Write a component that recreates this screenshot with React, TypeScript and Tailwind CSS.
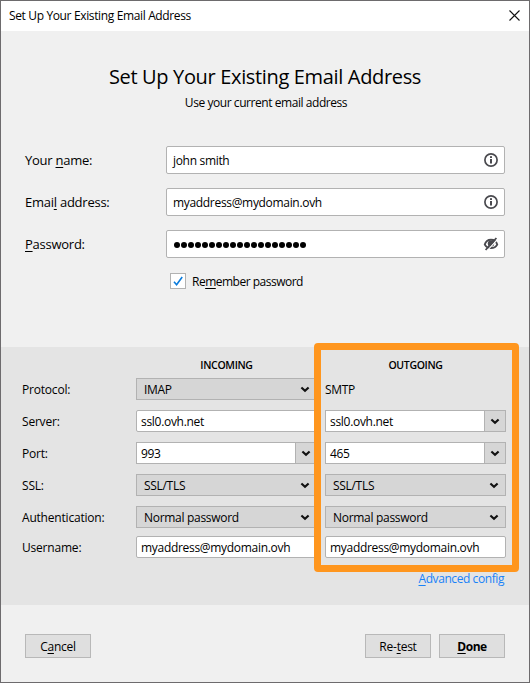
import React from "react";

const FONT = "font-['Open_Sans','Noto_Sans',sans-serif]";

function Key({ children }: { children: React.ReactNode }) {
  return <span className="underline decoration-1 underline-offset-2">{children}</span>;
}

function Chevron() {
  return (
    <svg width="10" height="7" viewBox="0 0 10 7" fill="none" className="shrink-0">
      <path d="M1.4 1.5 5 4.7 8.6 1.5" stroke="#111" strokeWidth="2.2" />
    </svg>
  );
}

function InfoIcon() {
  return (
    <svg width="14" height="14" viewBox="0 0 14 14" fill="none">
      <circle cx="7" cy="7" r="6.1" stroke="#4a4a4f" strokeWidth="1.7" />
      <rect x="6" y="3.2" width="2" height="1.8" fill="#4a4a4f" />
      <rect x="6" y="6" width="2" height="4.5" fill="#4a4a4f" />
    </svg>
  );
}

function EyeOffIcon() {
  return (
    <svg width="16" height="14" viewBox="0 0 16 14" fill="none" className="shrink-0">
      <path d="M1.8 7.6C2.6 4.6 5 2.700 8 2.700s5.400 1.900 6.200 4.900C13 9.800 10.800 11 8 11S3 9.800 1.800 7.600Z" stroke="#4a4a4f" strokeWidth="1.900" />
      <circle cx="8" cy="6.600" r="3.200" fill="#4a4a4f" />
      <path d="M4.400 13.400 14.600 2.400" stroke="#fff" strokeWidth="1.200" />
      <path d="M2.600 13 13.400 1" stroke="#4a4a4f" strokeWidth="1.800" />
    </svg>
  );
}

function Field({ label, icon, children }: { label: React.ReactNode; icon: React.ReactNode; children: React.ReactNode }) {
  return (
    <div className="flex h-7 items-center">
      <div className="w-[141px] text-[13px] tracking-[-0.25px]">{label}</div>
      <div className="flex h-7 w-[339px] items-center justify-between rounded-[2px] border border-[#b2b2b2] bg-white pr-[5px] pl-[6px]">
        <span className="pt-px tracking-[-0.32px]">{children}</span>
        <span className="flex w-4 justify-center">{icon}</span>
      </div>
    </div>
  );
}

function Select({ children }: { children: React.ReactNode }) {
  return (
    <div className="flex h-[22px] w-[181px] items-center justify-between border border-[#b2b2b2] bg-[#d6d6d6] pr-[6px] pl-[7px]">
      <span className="pt-px">{children}</span>
      <Chevron />
    </div>
  );
}

function Input({ children }: { children: React.ReactNode }) {
  return (
    <div className="flex h-[22px] w-[181px] items-center rounded-[2px] border border-[#b2b2b2] bg-white pl-1">
      <span className="pt-px">{children}</span>
    </div>
  );
}

function Combo({ children }: { children: React.ReactNode }) {
  return (
    <div className="flex h-[22px] w-[181px] border border-[#b2b2b2] bg-white">
      <span className="flex flex-1 items-center pt-px pl-1">{children}</span>
      <span className="flex w-[21px] items-center justify-center border-l border-[#b2b2b2] bg-[#d6d6d6]">
        <Chevron />
      </span>
    </div>
  );
}

function Row({ label, incoming, outgoing }: { label: string; incoming: React.ReactNode; outgoing: React.ReactNode }) {
  return (
    <div className="flex h-[22px] items-center">
      <div className="w-[114px] pt-px tracking-[-0.2px]">{label}</div>
      <div className="w-[189px]">{incoming}</div>
      <div className="w-[181px]">{outgoing}</div>
    </div>
  );
}

function Button({ children, className = "" }: { children: React.ReactNode; className?: string }) {
  return (
    <button className={`flex h-6 w-[66px] items-center justify-center border border-[#b8b8b8] bg-[#dfdfdf] pt-px ${className}`}>
      {children}
    </button>
  );
}

export default function App() {
  return (
    <div className={`${FONT} relative flex h-[683px] w-[530px] flex-col overflow-hidden border border-[#6d6b6d] bg-[#f0f0f0] text-xs leading-4 whitespace-nowrap text-black`}>
      <header className="flex h-[30px] shrink-0 items-center justify-between bg-white pr-[9px] pl-2">
        <span className="tracking-[-0.36px]">Set Up Your Existing Email Address</span>
        <svg width="11" height="11" viewBox="0 0 11 11" className="-mt-0.5" fill="none">
          <path d="M.5.5l10 10M10.500.5l-10 10" stroke="#111" strokeWidth="1.100" />
        </svg>
      </header>

      <section className="flex h-[316px] shrink-0 flex-col">
        <div className="mt-8 text-center text-xl leading-7 tracking-[-0.34px]">Set Up Your Existing Email Address</div>
        <div className="mt-1 pl-0.5 text-center tracking-[-0.44px]">Use your current email address</div>
        <div className="mt-[35px] flex flex-col gap-[14px] pl-6">
          <Field label={<>Your <Key>n</Key>ame:</>} icon={<InfoIcon />}>john smith</Field>
          <Field label={<>Emai<Key>l</Key> address:</>} icon={<InfoIcon />}>myaddress@mydomain.ovh</Field>
          <Field label={<><Key>P</Key>assword:</>} icon={<EyeOffIcon />}>
            <span className="flex gap-px pl-px">
              {Array.from({ length: 19 }, (_, i) => (
                <span key={i} className="size-[6px] rounded-full bg-black" />
              ))}
            </span>
          </Field>
        </div>
        <div className="mt-[14px] flex items-center gap-[6px] pl-[169px]">
          <span className="flex size-4 items-center justify-center border border-[#b2b2b2] bg-white">
            <svg width="12" height="12" viewBox="0 0 12 12" fill="none">
              <path d="M2 6.800 4.600 9.800 10.200 2" stroke="#0a7bdc" strokeWidth="1.600" />
            </svg>
          </span>
          <span className="pt-0.5 tracking-[-0.5px]">Re<Key>m</Key>ember password</span>
        </div>
      </section>

      <section className="flex h-[258px] shrink-0 flex-col bg-[#e4e4e4] pt-[10px] pl-[21px] tracking-[-0.3px]">
        <div className="flex h-4 text-[10.5px] font-semibold tracking-[-0.35px]">
          <span className="ml-[114px] w-[181px] text-center">INCOMING</span>
          <span className="ml-2 w-[181px] text-center">OUTGOING</span>
        </div>
        <div className="mt-[5px] flex flex-col gap-[10px]">
          <Row label="Protocol:" incoming={<Select>IMAP</Select>} outgoing={<div className="pt-0.5">SMTP</div>} />
          <Row label="Server:" incoming={<Input>ssl0.ovh.net</Input>} outgoing={<Combo>ssl0.ovh.net</Combo>} />
          <Row label="Port:" incoming={<Combo>993</Combo>} outgoing={<Combo>465</Combo>} />
          <Row label="SSL:" incoming={<Select>SSL/TLS</Select>} outgoing={<Select>SSL/TLS</Select>} />
          <Row label="Authentication:" incoming={<Select>Normal password</Select>} outgoing={<Select>Normal password</Select>} />
        </div>
        <div className="mt-2">
          <Row label="Username:" incoming={<Input>myaddress@mydomain.ovh</Input>} outgoing={<Input>myaddress@mydomain.ovh</Input>} />
        </div>
        <a className="mt-[13px] self-end pr-[25px] tracking-[-0.42px] text-[#1a82f7]"><Key>A</Key>dvanced config</a>
      </section>

      <footer className="mt-[29px] flex gap-2 px-6 tracking-[-0.25px]">
        <Button className="mr-auto"><span>C<Key>a</Key>ncel</span></Button>
        <Button><span>Re-<Key>t</Key>est</span></Button>
        <Button className="font-bold"><span className="tracking-[-0.5px]"><Key>D</Key>one</span></Button>
      </footer>

      <div className="absolute top-[342px] left-[313px] h-[229px] w-[205px] rounded-[4px] border-[7px] border-[#ff961e]" />
    </div>
  );
}
